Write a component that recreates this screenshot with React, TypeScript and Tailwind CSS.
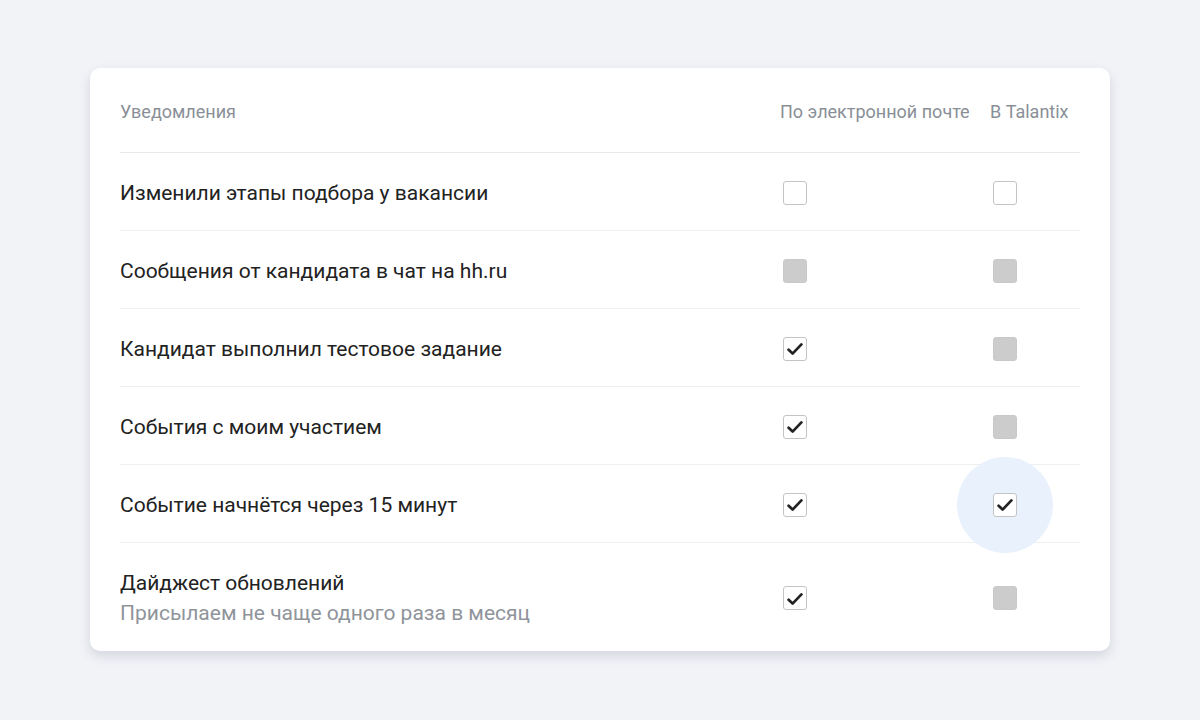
import React from "react";

type State = "empty" | "disabled" | "checked";

const Check = () => (
  <svg width="16" height="14" viewBox="0 0 16 14" className="block mt-[1px]">
    <path d="M1.6 7.8 L5.6 11.6 L14.4 2.4" fill="none" stroke="#222" strokeWidth="2.7" strokeLinecap="round" strokeLinejoin="round" />
  </svg>
);

const Box = ({ s, halo }: { s: State; halo?: boolean }) => (
  <div className="relative ml-[3px] w-6 h-6">
    {halo && <div className="absolute left-1/2 top-1/2 -translate-x-1/2 -translate-y-1/2 w-24 h-24 rounded-full bg-[#e9f1fc]" />}
    <div
      className={
        s === "disabled"
          ? "relative w-6 h-6 rounded-[3px] bg-[#cccccc] border border-[#c9c9c9]"
          : "relative w-6 h-6 rounded-[3px] bg-white border border-[#c4c4c4] flex items-center justify-center"
      }
    >
      {s === "checked" && <Check />}
    </div>
  </div>
);

const rows: { t: string; sub?: string; e: State; k: State; halo?: boolean }[] = [
  { t: "Изменили этапы подбора у вакансии", e: "empty", k: "empty" },
  { t: "Сообщения от кандидата в чат на hh.ru", e: "disabled", k: "disabled" },
  { t: "Кандидат выполнил тестовое задание", e: "checked", k: "disabled" },
  { t: "События с моим участием", e: "checked", k: "disabled" },
  { t: "Событие начнётся через 15 минут", e: "checked", k: "checked", halo: true },
  { t: "Дайджест обновлений", sub: "Присылаем не чаще одного раза в месяц", e: "checked", k: "disabled" },
];

export default function App() {
  return (
    <div className="min-h-[720px] w-[1200px] bg-[#f1f3f7] pt-[68px] px-[90px]" style={{ fontFamily: "Roboto, 'Noto Sans', sans-serif" }}>
      <div className="bg-white rounded-[10px] shadow-[0_5px_12px_rgba(40,50,80,0.15)] px-[30px] pb-[23px]">
        <div className="flex items-center pt-[32px] pb-[28px] border-b border-[#e8e9eb] text-[18px] leading-6 text-[#8a8f97]">
          <div className="flex-1">Уведомления</div>
          <div className="w-[210px]">По электронной почте</div>
          <div className="w-[90px]">В Talantix</div>
        </div>
        {rows.map((r, i) => (
          <div
            key={i}
            className={
              (r.sub ? "pt-[25px] " : "h-[78px] pt-[2px] ") +
              "flex items-center text-[21px] leading-[30px] text-[#222222] " +
              (i < rows.length - 1 ? "border-b border-[#eeeff1]" : "")
            }
          >
            <div className="flex-1">
              <div>{r.t}</div>
              {r.sub && <div className="text-[#8f949b]">{r.sub}</div>}
            </div>
            <div className="w-[210px]">
              <Box s={r.e} />
            </div>
            <div className="w-[90px]">
              <Box s={r.k} halo={r.halo} />
            </div>
          </div>
        ))}
      </div>
    </div>
  );
}
